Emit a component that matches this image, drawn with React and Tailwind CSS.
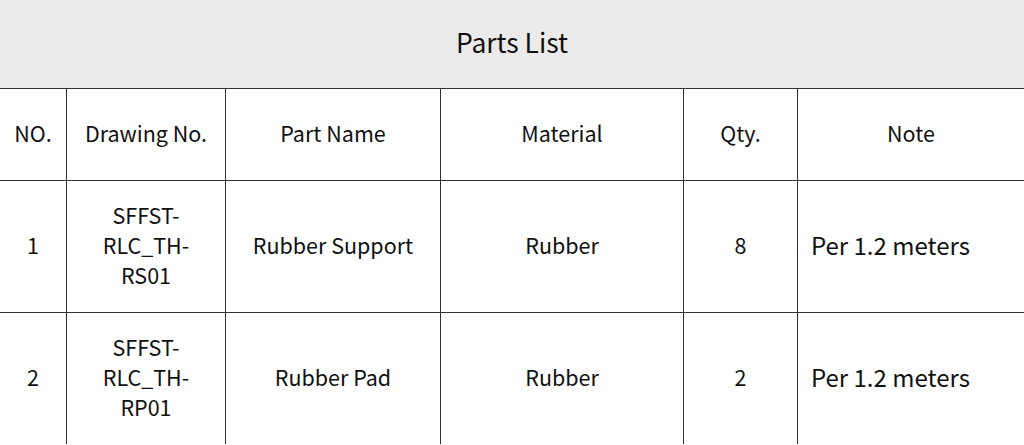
const COLS = "grid grid-cols-[66px_159px_215px_243px_114px_227px]";

const HEADERS = ["NO.", "Drawing No.", "Part Name", "Material", "Qty.", "Note"];

const PARTS = [
  { no: "1", drawing: ["SFFST-", "RLC_TH-", "RS01"], name: "Rubber Support", material: "Rubber", qty: "8", note: "Per 1.2 meters" },
  { no: "2", drawing: ["SFFST-", "RLC_TH-", "RP01"], name: "Rubber Pad", material: "Rubber", qty: "2", note: "Per 1.2 meters" },
];

function Cell({ first, className = "", children }) {
  return (
    <div className={`flex items-center justify-center text-center pb-[3px] ${first ? "" : "border-l border-[#333]"} ${className}`}>
      {children}
    </div>
  );
}

export default function App() {
  return (
    <div
      className="w-[1024px] h-[445px] overflow-hidden bg-white text-[#111]"
      style={{ fontFamily: '"Noto Sans CJK SC", "Noto Sans", sans-serif' }}
    >
      <div className="h-[88px] bg-[#ebebeb] flex items-center justify-center pb-[4px] text-[26.5px]">
        Parts List
      </div>

      <div className={`${COLS} h-[92px] border-t border-[#333] text-[21.5px]`}>
        {HEADERS.map((h, i) => (
          <Cell key={h} first={i === 0}>{h}</Cell>
        ))}
      </div>

      {PARTS.map(p => (
        <div key={p.no} className={`${COLS} h-[132px] border-t border-[#333] text-[21.5px] leading-[30px]`}>
          <Cell first>{p.no}</Cell>
          <Cell>
            <div className="flex flex-col">
              {p.drawing.map(line => <span key={line}>{line}</span>)}
            </div>
          </Cell>
          <Cell>{p.name}</Cell>
          <Cell>{p.material}</Cell>
          <Cell>{p.qty}</Cell>
          <Cell className="!justify-start pl-[13px] text-[24px]">{p.note}</Cell>
        </div>
      ))}
    </div>
  );
}
